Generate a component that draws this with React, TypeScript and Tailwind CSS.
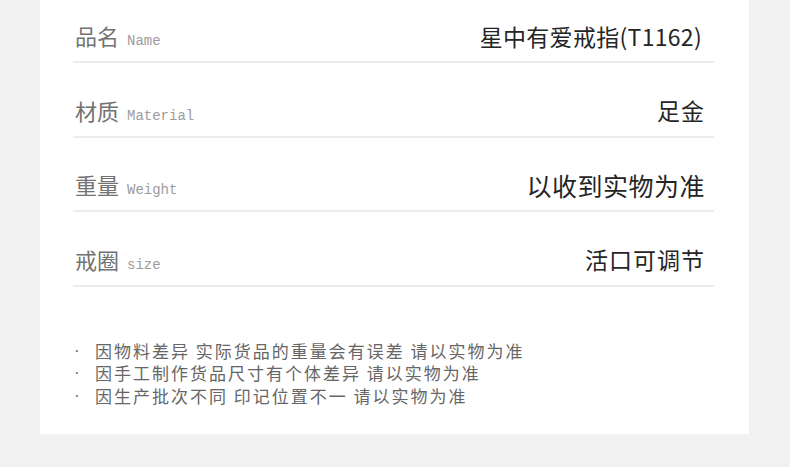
import React from 'react';

const cjk = "font-['Noto_Sans_CJK_SC',sans-serif]";

const rows = [
  { zh: '品名', en: 'Name', value: '星中有爱戒指(T1162)', size: 'text-[23px] tracking-[0.3px] mr-[3px]' },
  { zh: '材质', en: 'Material', value: '足金', size: 'text-[23px] tracking-[1px]' },
  { zh: '重量', en: 'Weight', value: '以收到实物为准', size: 'text-[25px] tracking-[0.5px]' },
  { zh: '戒圈', en: 'size', value: '活口可调节', size: 'text-[23px] tracking-[1px]' },
];

const notes = [
  '因物料差异 实际货品的重量会有误差 请以实物为准',
  '因手工制作货品尺寸有个体差异 请以实物为准',
  '因生产批次不同 印记位置不一 请以实物为准',
];

export default function App() {
  return (
    <div className="w-[790px] h-[470px] bg-white overflow-hidden">
      <div className="h-[467px] bg-[#f1f1f1] px-[40px]">
        <div className="w-[709px] h-[434px] bg-white">
          <div className="ml-[33px] w-[641px]">
            {rows.map((r, i) => (
              <div
                key={r.zh}
                className={`${i === 0 ? 'h-[63px] pt-[11px]' : 'h-[74.5px] pt-[22.5px]'} flex items-center justify-between pr-[9px] border-b-2 border-[#ececec]`}
              >
                <div className="flex items-baseline pl-[2px]">
                  <span className={`${cjk} text-[22px] leading-none text-[#727272]`}>{r.zh}</span>
                  <span className="font-['Liberation_Mono',monospace] text-[14px] leading-none text-[#9c9c9c] ml-[8px]">
                    {r.en}
                  </span>
                </div>
                <span className={`${cjk} ${r.size} leading-none text-[#252525]`}>{r.value}</span>
              </div>
            ))}
          </div>
          <ul className={`${cjk} mt-[53px] ml-[33px] text-[17px] tracking-[2px] text-[#666]`}>
            {notes.map((n) => (
              <li key={n} className="flex h-[22.5px] items-center">
                <span className="w-[22px] pl-[1px] leading-[18px] font-['Liberation_Sans',sans-serif]">·</span>
                <span className="leading-[20px]">{n}</span>
              </li>
            ))}
          </ul>
        </div>
      </div>
    </div>
  );
}
